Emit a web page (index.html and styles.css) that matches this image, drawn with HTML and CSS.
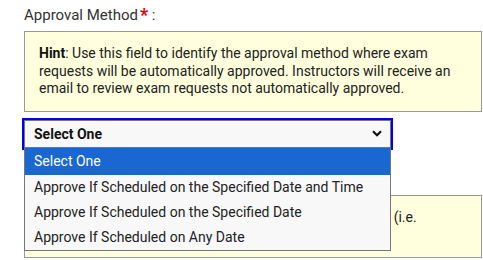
FILE: index.html
```html
<!DOCTYPE html>
<html lang="en">
<head>
    <meta charset="UTF-8">
    <meta name="viewport" content="width=device-width, initial-scale=1.0">
    <title>Approval Method</title>
    <link rel="stylesheet" href="styles.css">
</head>
<body>
    <div class="form-field">
        <label class="field-label">Approval Method<span class="required">*</span> :</label>

        <div class="hint">
            <b>Hint</b>: Use this field to identify the approval method where exam requests will be automatically approved. Instructors will receive an email to review exam requests not automatically approved.
        </div>

        <div class="select-wrap">
            <div class="select">
                <span>Select One</span>
                <svg class="chevron" width="10" height="7" viewBox="0 0 10 7">
                    <path d="M1 1.2 L5 5.2 L9 1.2" fill="none" stroke="#111" stroke-width="2.2"/>
                </svg>
            </div>
            <!-- open dropdown list -->
            <ul class="options">
                <li class="selected">Select One</li>
                <li>Approve If Scheduled on the Specified Date and Time</li>
                <li>Approve If Scheduled on the Specified Date</li>
                <li>Approve If Scheduled on Any Date</li>
            </ul>
        </div>

        <div class="hint hint-next">
            <b>Hint</b>: Requests scheduled outside of the allowed window (i.e.
        </div>
    </div>
</body>
</html>
```

FILE: styles.css
```css
body {
    margin: 0;
    padding: 0;
    font-family: 'Roboto', 'Liberation Sans', sans-serif;
    color: #222;
    background: #fff;
}

.form-field {
    padding: 5px 1px 0 24px;
}

.field-label {
    display: block;
    font-size: 15px;
    line-height: 20px;
    color: #333;
    margin-bottom: 6px;
}

.required {
    color: #e00;
    font-size: 18px;
    font-weight: bold;
    margin-left: 2px;
    vertical-align: top;
}

.hint {
    background: #ffffdd;
    border: 1px solid #999;
    padding: 13px 14px 13px;
    font-size: 14px;
    line-height: 17.5px;
    color: #222;
}

.hint b {
    color: #111;
}

.select-wrap {
    position: relative;
    width: 367px;
    margin-top: 8px;
}

.select {
    display: flex;
    align-items: center;
    justify-content: space-between;
    height: 26px;
    padding: 0 8px 0 9px;
    background: #f8f8f8;
    border: 1px solid #767676;
    outline: 2px solid #0000ee;
    font-size: 14px;
    font-weight: bold;
    color: #111;
}

.options {
    position: absolute;
    top: 28px;
    left: 0;
    right: 0;
    margin: 0;
    padding: 0;
    list-style: none;
    background: #f8f8f8;
    border: 1px solid #767676;
    border-top: none;
    font-size: 14px;
    color: #222;
    z-index: 2;
}

.options li {
    height: 25px;
    line-height: 25px;
    padding-left: 9px;
}

.options li.selected {
    height: 27px;
    line-height: 27px;
    background: #1a67d2;
    color: #fff;
}

.hint-next {
    margin-top: 47px;
    height: 35px;
}
```
